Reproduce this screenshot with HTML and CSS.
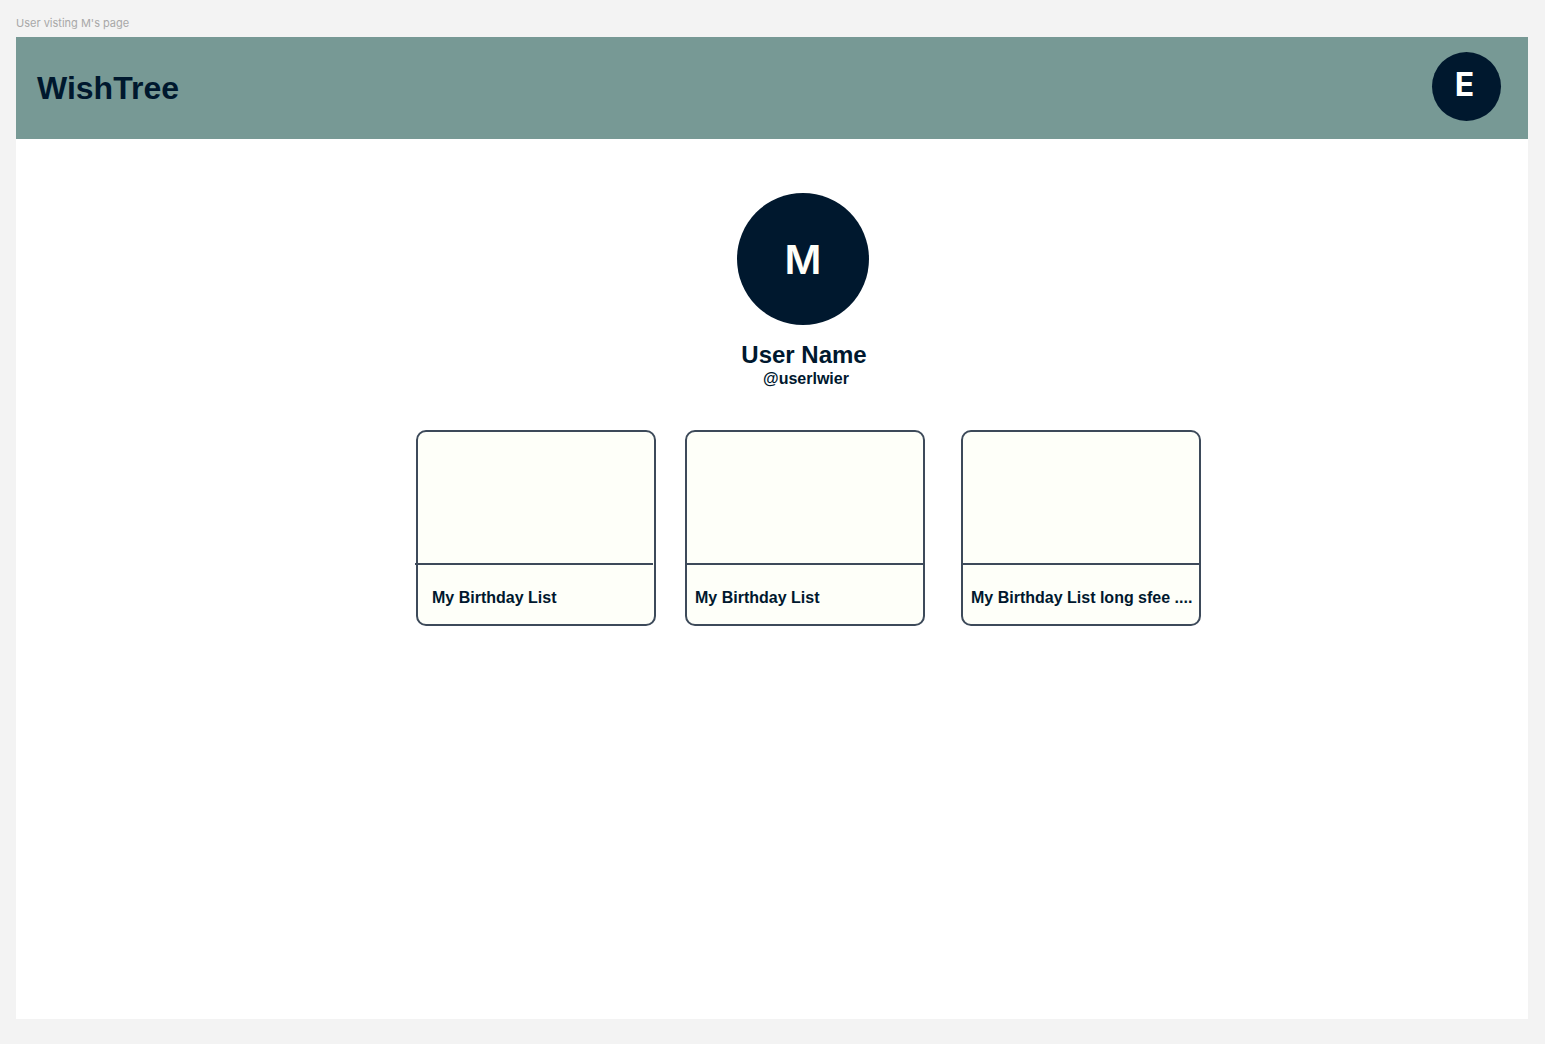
FILE: index.html
```html
<!DOCTYPE html>
<html lang="en">
<head>
  <meta charset="utf-8">
  <meta name="viewport" content="width=device-width, initial-scale=1">
  <title>WishTree</title>
  <link rel="stylesheet" href="styles.css">
</head>
<body>
  <p class="frame-label">User visting M's page</p>
  <div class="frame">
    <header class="topbar">
      <h1 class="brand">WishTree</h1>
      <div class="avatar avatar-small">E</div>
    </header>
    <main class="content">
      <section class="profile">
        <div class="avatar avatar-large">M</div>
        <h2 class="name">User Name</h2>
        <p class="handle">@userlwier</p>
      </section>
      <section class="lists">
        <article class="card card-first">
          <div class="cover"></div>
          <hr class="divider">
          <h3 class="title">My Birthday List</h3>
        </article>
        <article class="card">
          <div class="cover"></div>
          <hr class="divider">
          <h3 class="title">My Birthday List</h3>
        </article>
        <article class="card card-last">
          <div class="cover"></div>
          <hr class="divider">
          <h3 class="title">My Birthday List long sfee ....</h3>
        </article>
      </section>
    </main>
  </div>
</body>
</html>
```
FILE: styles.css
```css
* {
  box-sizing: border-box;
}

body {
  display: flex;
  flex-direction: column;
  min-height: 100vh;
  margin: 0;
  padding: 14px 17px 25px 16px;
  background: #f3f3f3;
  color: #00182e;
  font-family: "Liberation Sans", Arial, sans-serif;
}

h1,
h2,
h3,
p {
  margin: 0;
}

.frame-label {
  padding-bottom: 5px;
  color: #a8a8a8;
  font-family: Inter, sans-serif;
  font-size: 11px;
  line-height: 18px;
}

.frame {
  flex: 1;
  background: #fff;
}

.topbar {
  display: flex;
  align-items: center;
  justify-content: space-between;
  height: 102px;
  padding: 0 27px 4px 21px;
  background: #779995;
}

.brand {
  padding-top: 4px;
  font-size: 32px;
  line-height: 40px;
}

.avatar {
  display: flex;
  align-items: center;
  justify-content: center;
  border-radius: 50%;
  background: #00182e;
  font-family: Inter, sans-serif;
  font-weight: 700;
}

.avatar-small {
  width: 69px;
  height: 69px;
  padding: 0 4px 4px 0;
  color: #fff;
  font-size: 32px;
}

.avatar-large {
  width: 132px;
  height: 132px;
  color: #fefff9;
  font-size: 40px;
  font-weight: 600;
}

.content {
  padding: 54px 0 54px 62px;
}

.profile {
  display: flex;
  flex-direction: column;
  align-items: center;
}

.name {
  padding: 16px 0 0 2px;
  font-size: 24px;
  line-height: 28px;
}

.handle {
  padding-left: 6px;
  font-size: 16px;
  font-weight: 700;
  line-height: 20px;
}

.lists {
  display: flex;
  flex-wrap: wrap;
  justify-content: center;
  gap: 29px;
  padding: 41px 0 0 11px;
}

.card {
  width: 240px;
  border: 2px solid #3d4a5a;
  border-radius: 10px;
  background: #fefff9;
}

.card-last {
  margin-left: 7px;
}

.cover {
  height: 131px;
}

.divider {
  height: 2px;
  margin: 0;
  border: 0;
  background: #3d4a5a;
}

/* The first card's rule runs over its left edge and stops short of the right. */
.card-first .divider {
  margin: 0 1px 0 -3px;
}

.title {
  padding: 23px 8px 16px;
  font-size: 16px;
  line-height: 20px;
  white-space: nowrap;
}

.card-first .title {
  padding-left: 14px;
}
```
